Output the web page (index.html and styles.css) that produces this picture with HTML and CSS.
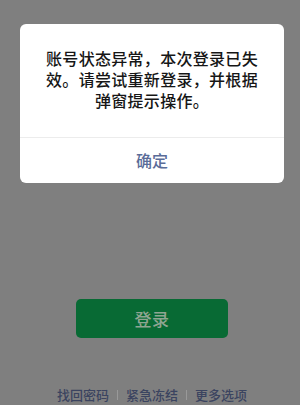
FILE: index.html
```html
<!DOCTYPE html>
<html lang="zh-CN">
<head>
<meta charset="utf-8">
<link rel="stylesheet" href="styles.css">
</head>
<body>
<div class="screen">
  <div class="dialog">
    <div class="dialog-msg">账号状态异常，本次登录已失效。请尝试重新登录，并根据弹窗提示操作。</div>
    <div class="dialog-btn">确定</div>
  </div>
  <div class="login-btn">登录</div>
  <div class="links">
    <span class="link">找回密码</span>
    <span class="sep"></span>
    <span class="link">紧急冻结</span>
    <span class="sep"></span>
    <span class="link">更多选项</span>
  </div>
</div>
</body>
</html>
```
FILE: styles.css
```css
html, body {
  margin: 0;
  padding: 0;
  width: 300px;
  height: 405px;
  overflow: hidden;
  background: #7f7f7f;
  font-family: "Noto Sans CJK SC", "Noto Sans", sans-serif;
}
.screen {
  display: flex;
  flex-direction: column;
  align-items: center;
  width: 300px;
  height: 405px;
}
.dialog {
  margin-top: 24px;
  margin-left: 4px;
  width: 264px;
  height: 159px;
  background: #ffffff;
  border-radius: 6px;
  display: flex;
  flex-direction: column;
  box-sizing: border-box;
}
.dialog-msg {
  padding: 24px 24px 0;
  height: 114px;
  box-sizing: border-box;
  border-bottom: 1px solid #ececec;
  font-size: 16px;
  font-weight: 500;
  letter-spacing: 0.3px;
  line-height: 21px;
  color: #161616;
  text-align: center;
}
.dialog-btn {
  flex: 1;
  display: flex;
  align-items: center;
  justify-content: center;
  font-size: 16px;
  font-weight: 500;
  color: #5a6c98;
  padding-bottom: 2px;
}
.login-btn {
  margin-top: 116px;
  margin-left: 4px;
  width: 152px;
  height: 39px;
  border-radius: 5px;
  background: #086a34;
  color: #8fa592;
  font-size: 17px;
  font-weight: 500;
  display: flex;
  align-items: center;
  justify-content: center;
  letter-spacing: 0.5px;
}
.links {
  margin-top: 48px;
  margin-left: 4px;
  display: flex;
  align-items: center;
  gap: 8px;
  font-size: 13px;
  font-weight: 500;
  line-height: 18px;
  color: #3b4460;
}
.sep {
  width: 1px;
  height: 10px;
  background: #999999;
}
```
